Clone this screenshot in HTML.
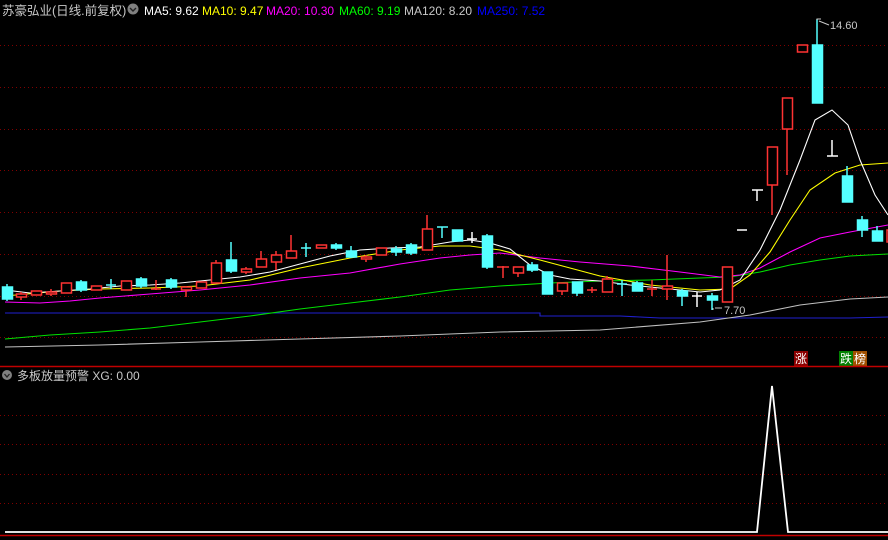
<!DOCTYPE html>
<html><head><meta charset="utf-8"><style>
html,body{margin:0;padding:0;background:#000;width:888px;height:540px;overflow:hidden}
svg{display:block}
text{font-family:"Liberation Sans","Noto Sans CJK SC",sans-serif}
</style></head><body>
<svg width="888" height="540" viewBox="0 0 888 540" xmlns="http://www.w3.org/2000/svg">
<rect width="888" height="540" fill="#000"/>
<g stroke="#800000" stroke-width="1" stroke-dasharray="1 3">
<line x1="0" y1="45.5" x2="888" y2="45.5"/><line x1="0" y1="87.5" x2="888" y2="87.5"/>
<line x1="0" y1="129.5" x2="888" y2="129.5"/><line x1="0" y1="170.5" x2="888" y2="170.5"/>
<line x1="0" y1="212.5" x2="888" y2="212.5"/><line x1="0" y1="254.5" x2="888" y2="254.5"/>
<line x1="0" y1="296.5" x2="888" y2="296.5"/><line x1="0" y1="337.5" x2="888" y2="337.5"/>
<line x1="0" y1="415.5" x2="888" y2="415.5"/><line x1="0" y1="444.5" x2="888" y2="444.5"/>
<line x1="0" y1="474.5" x2="888" y2="474.5"/><line x1="0" y1="503.5" x2="888" y2="503.5"/>
</g>
<!-- MA lines -->
<g fill="none" stroke-width="1.1">
<polyline stroke="#2020d0" points="5,313 540,313 540,316 620,316 660,318 850,318 888,317"/>
<polyline stroke="#c0c0c0" points="5,347 100,345 200,342 300,339 400,336 500,332 600,330 700,322 750,315 800,305 850,299 888,297"/>
<polyline stroke="#00e000" points="5,339 50,335 100,332 150,328 200,322 250,316 300,309 350,303 400,297 450,290 500,286 550,283 600,281 650,280 700,278 730,277 760,272 790,265 820,260 850,256 888,254"/>
<polyline stroke="#ff00ff" points="5,302 40,303 70,301 100,298 150,294 200,290 250,285 300,278 350,273 400,264 440,258 470,255 500,253 540,258 580,262 630,266 680,272 720,277 740,275 760,268 790,252 820,238 850,232 888,225"/>
<polyline stroke="#ffff00" points="5,296 60,291 100,289 150,288 200,286 250,280 300,268 350,258 400,250 440,246 470,246 500,250 540,260 570,268 600,276 650,285 700,290 730,289 750,275 770,252 790,220 810,190 835,173 860,165 888,163"/>
<polyline stroke="#ffffff" points="5,290 30,293 60,291 90,289 120,286 150,285 180,283 210,280 240,277 270,272 300,264 330,256 360,250 390,248 420,247 450,242 470,240 490,243 510,249 530,265 550,275 570,279 600,281 630,285 660,288 700,292 720,290 740,280 760,250 780,210 800,160 815,120 832,110 848,125 860,160 875,195 888,215"/>
</g>
<!-- candles -->
<g stroke="#ff3232" stroke-width="1.5" fill="#000">
<line x1="21" y1="292" x2="21" y2="300"/><rect x="16.5" y="294" width="10" height="3"/>
<rect x="31.5" y="291" width="10" height="4"/>
<line x1="51" y1="289" x2="51" y2="296"/><rect x="46.5" y="292" width="10" height="2"/>
<rect x="61.5" y="283" width="10" height="10"/>
<rect x="91.5" y="286" width="10" height="4"/>
<rect x="121.5" y="281" width="10" height="9"/>
<line x1="156" y1="280" x2="156" y2="290"/><line x1="151" y1="289" x2="161" y2="289"/>
<line x1="186" y1="286" x2="186" y2="297"/><rect x="181.5" y="287" width="10" height="3"/>
<rect x="196.5" y="282" width="10" height="6"/>
<line x1="216" y1="260" x2="216" y2="263"/><rect x="211.5" y="263" width="10" height="20"/>
<line x1="246" y1="267" x2="246" y2="274"/><rect x="241.5" y="269" width="10" height="3"/>
<line x1="261" y1="251" x2="261" y2="259"/><rect x="256.5" y="259" width="10" height="8"/>
<line x1="276" y1="251" x2="276" y2="270"/><rect x="271.5" y="255" width="10" height="7"/>
<line x1="291" y1="235" x2="291" y2="251"/><rect x="286.5" y="251" width="10" height="7"/>
<rect x="316.5" y="245" width="10" height="3"/>
<line x1="366" y1="255" x2="366" y2="262"/><rect x="361.5" y="257" width="10" height="2"/>
<rect x="376.5" y="248" width="10" height="7"/>
<line x1="427" y1="215" x2="427" y2="229"/><rect x="422.5" y="229" width="10" height="21"/>
<line x1="503" y1="266" x2="503" y2="278"/><line x1="497" y1="267" x2="509" y2="267"/>
<line x1="518" y1="273" x2="518" y2="277"/><rect x="513.5" y="267" width="10" height="6"/>
<line x1="562" y1="291" x2="562" y2="295"/><rect x="557.5" y="283" width="10" height="8"/>
<line x1="592" y1="287" x2="592" y2="293"/><line x1="587" y1="290" x2="597" y2="290"/>
<line x1="607" y1="276" x2="607" y2="279"/><rect x="602.5" y="279" width="10" height="13"/>
<line x1="652" y1="280" x2="652" y2="296"/><line x1="647" y1="289" x2="657" y2="289"/>
<line x1="667" y1="255" x2="667" y2="300"/><rect x="662.5" y="286" width="10" height="3"/>
<rect x="722.5" y="267" width="10" height="35"/>
<line x1="772" y1="185" x2="772" y2="215"/><rect x="767.5" y="147" width="10" height="38"/>
<line x1="787" y1="129" x2="787" y2="175"/><rect x="782.5" y="98" width="10" height="31"/>
<rect x="797.5" y="45" width="10" height="7"/>
<rect x="887" y="230" width="4" height="12"/>
</g>
<g stroke="#54ffff" stroke-width="1.5" fill="#54ffff">
<line x1="7" y1="284" x2="7" y2="301"/><rect x="2.5" y="287" width="10" height="12"/>
<line x1="81" y1="280" x2="81" y2="292"/><rect x="76.5" y="282" width="10" height="8"/>
<line x1="111" y1="279" x2="111" y2="289"/><line x1="106" y1="285" x2="116" y2="285"/>
<line x1="141" y1="277" x2="141" y2="288"/><rect x="136.5" y="279" width="10" height="7"/>
<line x1="171" y1="278" x2="171" y2="289"/><rect x="166.5" y="280" width="10" height="7"/>
<line x1="231" y1="242" x2="231" y2="273"/><rect x="226.5" y="260" width="10" height="11"/>
<line x1="306" y1="243" x2="306" y2="257"/><line x1="301" y1="248" x2="311" y2="248"/>
<line x1="336" y1="243" x2="336" y2="250"/><rect x="331.5" y="245" width="10" height="3"/>
<line x1="351" y1="246" x2="351" y2="258"/><rect x="346.5" y="251" width="10" height="6"/>
<line x1="396" y1="246" x2="396" y2="256"/><rect x="391.5" y="249" width="10" height="3"/>
<line x1="411" y1="243" x2="411" y2="255"/><rect x="406.5" y="245" width="10" height="8"/>
<line x1="442" y1="227" x2="442" y2="238"/><line x1="437" y1="227" x2="448" y2="227"/>
<rect x="452.5" y="230" width="10" height="11"/>
<line x1="487" y1="234" x2="487" y2="269"/><rect x="482.5" y="236" width="10" height="31"/>
<line x1="532" y1="262" x2="532" y2="272"/><rect x="527.5" y="265" width="10" height="5"/>
<rect x="542.5" y="272" width="10" height="22"/>
<line x1="577" y1="282" x2="577" y2="296"/><rect x="572.5" y="282" width="10" height="11"/>
<line x1="622" y1="280" x2="622" y2="296"/><line x1="617" y1="284" x2="627" y2="284"/>
<line x1="637" y1="281" x2="637" y2="291"/><rect x="632.5" y="283" width="10" height="8"/>
<line x1="682" y1="289" x2="682" y2="306"/><rect x="677.5" y="291" width="10" height="5"/>
<line x1="712" y1="293" x2="712" y2="310"/><rect x="707.5" y="296" width="10" height="4"/>
<line x1="817" y1="19" x2="817" y2="45"/><rect x="812.5" y="45" width="10" height="58"/>
<line x1="847" y1="166" x2="847" y2="176"/><rect x="842.5" y="176" width="10" height="26"/>
<line x1="862" y1="216" x2="862" y2="237"/><rect x="857.5" y="220" width="10" height="10"/>
<line x1="877" y1="226" x2="877" y2="241"/><rect x="872.5" y="231" width="10" height="10"/>
</g>
<g stroke="#fff" stroke-width="1.5">
<line x1="472" y1="232" x2="472" y2="243"/><line x1="467" y1="239" x2="477" y2="239"/>
<line x1="697" y1="292" x2="697" y2="307"/><line x1="692" y1="296" x2="702" y2="296"/>
<line x1="737" y1="230" x2="747" y2="230"/>
<line x1="752" y1="190" x2="763" y2="190"/><line x1="757" y1="190" x2="757" y2="201"/>
<line x1="827" y1="156" x2="838" y2="156"/><line x1="832" y1="140" x2="832" y2="156"/>
</g>
<!-- labels -->
<g fill="#c8c8c8" font-size="11">
<text x="830" y="29">14.60</text>
<text x="724" y="314">7.70</text>
</g>
<path d="M817 20 L817 19 L821 19 M819 21 L829 25" stroke="#c8c8c8" fill="none"/>
<path d="M713 310 L713 308 M715 308 L722 308" stroke="#c8c8c8" fill="none"/>
<!-- header -->
<text x="2" y="15" font-size="12.5" fill="#c8c8c8">苏豪弘业(日线.前复权)</text>
<circle cx="133" cy="9" r="5.5" fill="#808080"/><path d="M130 8 L133 11 L136 8" stroke="#222" fill="none" stroke-width="1.4"/>
<text y="15" font-size="12" x="144" fill="#fff">MA5: 9.62</text>
<text y="15" font-size="12" x="202" fill="#ffff00">MA10: 9.47</text>
<text y="15" font-size="12" x="266" fill="#ff00ff">MA20: 10.30</text>
<text y="15" font-size="12" x="339" fill="#00ff00">MA60: 9.19</text>
<text y="15" font-size="12" x="404" fill="#c8c8c8">MA120: 8.20</text>
<text y="15" font-size="12" x="477" fill="#0000ff">MA250: 7.52</text>
<!-- badges -->
<rect x="794" y="351" width="14" height="15" fill="#8b0000"/><text x="795" y="363" font-size="12" fill="#fff">涨</text>
<rect x="839" y="351" width="14" height="15" fill="#008000"/><text x="840" y="363" font-size="12" fill="#fff">跌</text>
<rect x="853" y="351" width="14" height="15" fill="#a05000"/><text x="854" y="363" font-size="12" fill="#fff">榜</text>
<line x1="0" y1="366.5" x2="888" y2="366.5" stroke="#c00000" stroke-width="1.5"/>
<circle cx="7" cy="375" r="5" fill="#808080"/><path d="M4.5 374 L7 377 L9.5 374" stroke="#222" fill="none" stroke-width="1.3"/>
<text x="17" y="380" font-size="12" fill="#c8c8c8">多板放量预警 XG: 0.00</text>
<polyline fill="none" stroke="#fff" stroke-width="1.8" points="5,532 757,532 772,386 788,532 888,532"/>
<line x1="0" y1="535.5" x2="888" y2="535.5" stroke="#c00000" stroke-width="1.5"/>
</svg>
</body></html>
